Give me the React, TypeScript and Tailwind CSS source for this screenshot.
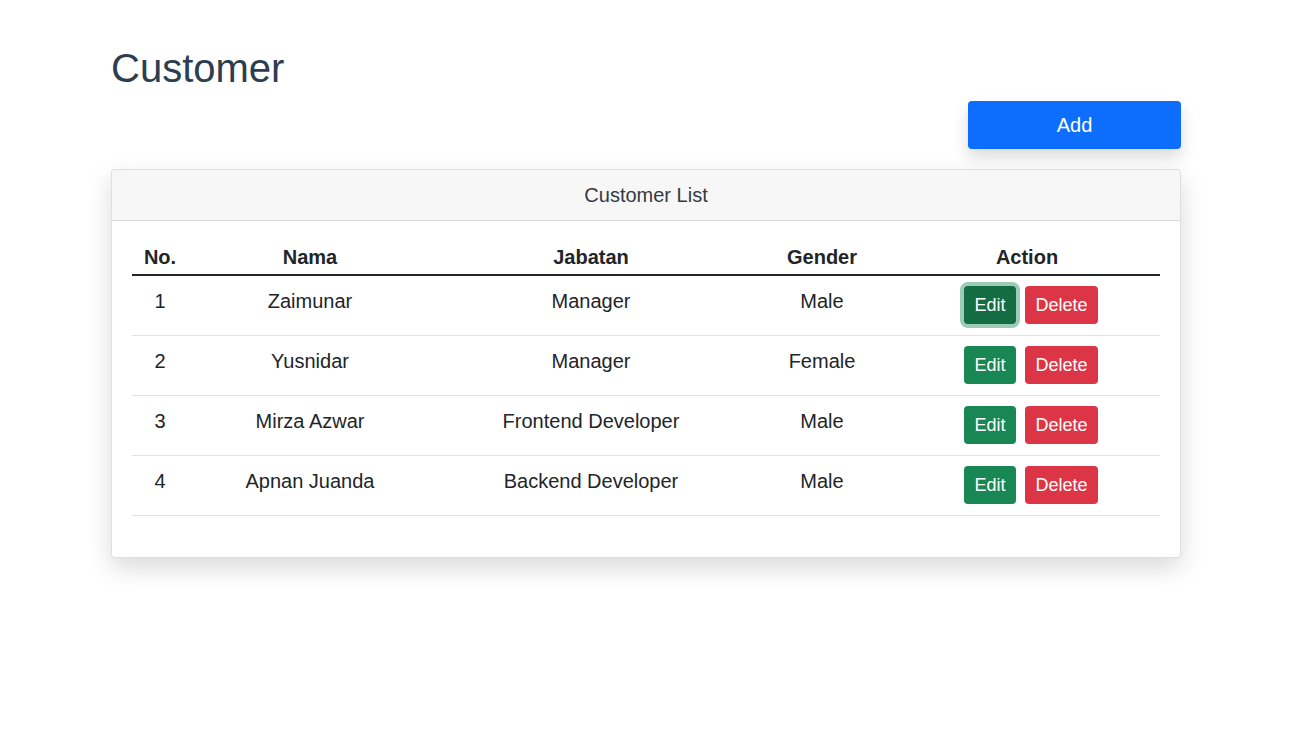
import React from 'react';

interface Customer {
  id: number;
  nama: string;
  jabatan: string;
  gender: string;
}

const customers: Customer[] = [
  { id: 1, nama: 'Zaimunar', jabatan: 'Manager', gender: 'Male' },
  { id: 2, nama: 'Yusnidar', jabatan: 'Manager', gender: 'Female' },
  { id: 3, nama: 'Mirza Azwar', jabatan: 'Frontend Developer', gender: 'Male' },
  { id: 4, nama: 'Apnan Juanda', jabatan: 'Backend Developer', gender: 'Male' },
];

export default function App() {
  return (
    <div className="min-h-screen bg-white font-['Liberation_Sans',Arial,sans-serif] text-[#212529]">
      <div className="w-[1070px] ml-[111px] pt-[44px]">
        <h1 className="text-[40px] leading-[48px] text-[#2c3e50] mb-[9px]">Customer</h1>

        <div className="flex justify-end">
          <button className="w-[213px] h-[48px] rounded bg-[#0d6efd] text-white text-[20px] shadow-[0_8px_16px_rgba(0,0,0,0.15)]">
            Add
          </button>
        </div>

        <div className="mt-[20px] border border-black/[0.125] rounded bg-white shadow-[0_10px_24px_rgba(0,0,0,0.15)]">
          <div className="h-[51px] flex items-center justify-center bg-[#f7f7f7] border-b border-black/[0.125] text-[20px] text-[#343a40] rounded-t">
            Customer List
          </div>

          <div className="px-[20px] pt-[20px] pb-[41px]">
            <table className="w-full border-collapse text-[20px] leading-[30px]">
              <thead>
                <tr className="border-b-2 border-[#212529]">
                  <th className="w-[56px] pt-px pb-[2px] font-bold text-center">No.</th>
                  <th className="w-[244px] pt-px pb-[2px] font-bold text-center">Nama</th>
                  <th className="w-[318px] pt-px pb-[2px] font-bold text-center">Jabatan</th>
                  <th className="w-[144px] pt-px pb-[2px] font-bold text-center">Gender</th>
                  <th className="pt-px pb-[2px] font-bold text-center">Action</th>
                </tr>
              </thead>
              <tbody>
                {customers.map((c, i) => (
                  <tr key={c.id} className="border-b border-[#dee2e6]">
                    <td className="align-top text-center pt-[10px]">{c.id}</td>
                    <td className="align-top text-center pt-[10px]">{c.nama}</td>
                    <td className="align-top text-center pt-[10px]">{c.jabatan}</td>
                    <td className="align-top text-center pt-[10px]">{c.gender}</td>
                    <td className="align-top pt-[10px] pb-[11px] pl-[70px]">
                      <div className="flex gap-[9px]">
                        <button
                          className={`w-[52px] h-[38px] rounded text-[18px] leading-[27px] text-white ${
                            i === 0
                              ? 'bg-[#146c43] ring-4 ring-[#3c996e]/50'
                              : 'bg-[#198754]'
                          }`}
                        >
                          Edit
                        </button>
                        <button className="w-[73px] h-[38px] rounded text-[18px] leading-[27px] text-white bg-[#dc3545]">
                          Delete
                        </button>
                      </div>
                    </td>
                  </tr>
                ))}
              </tbody>
            </table>
          </div>
        </div>
      </div>
    </div>
  );
}
